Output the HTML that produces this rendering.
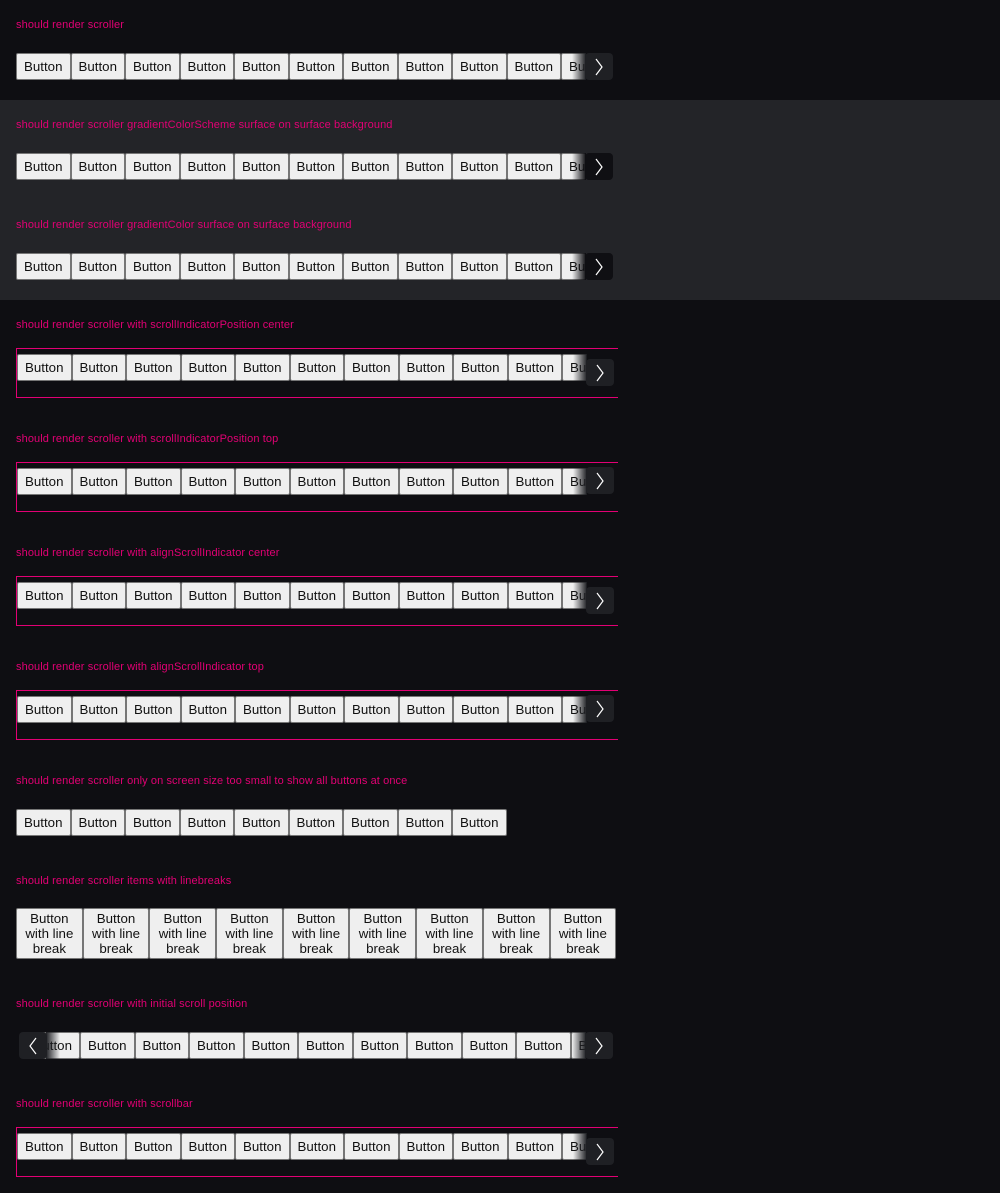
<!DOCTYPE html>
<html><head><meta charset="utf-8"><style>
*{box-sizing:border-box;margin:0;padding:0}
body{width:1000px;height:1193px;background:#0e0e12;position:relative;overflow:hidden;font-family:"Liberation Sans",sans-serif}
.lbl{position:absolute;left:16px;font-size:11px;color:#e20074;line-height:14px;white-space:nowrap;letter-spacing:0.1px;margin-top:2px}
.surf{position:absolute;left:0;top:100px;width:1000px;height:200px;background:#232428}
.row{position:absolute;left:16px;width:569px;height:28px;overflow:hidden;white-space:nowrap;display:flex;margin-top:1px}
.b{flex:0 0 54.5px;width:54.5px;height:27px;background:#efefef;border:1px solid #767676;border-radius:2px;font-size:13.3px;color:#111;display:flex;align-items:center;justify-content:center}
.lb{flex:0 0 66.7px;width:66.7px;height:51px;line-height:15px;text-align:center;flex-direction:column}
.arr{position:absolute;width:28px;height:27px;background:#1f2024;border-radius:4px;display:flex;align-items:center;justify-content:center;margin-top:1px}
.arr.d{background:#0f0f13}
.fade{position:absolute;width:14px;height:27px;margin-top:1px}
.box{position:absolute;left:16px;width:602px;height:50px;border-top:1px solid #e20074;border-left:1px solid #e20074;border-bottom:1px solid #e20074}
.box .row{margin-top:0}
</style></head><body>
<div class="surf"></div>

<div class="lbl" style="top:16px">should render scroller</div>
<div class="row" style="top:52px"><div class="b">Button</div><div class="b">Button</div><div class="b">Button</div><div class="b">Button</div><div class="b">Button</div><div class="b">Button</div><div class="b">Button</div><div class="b">Button</div><div class="b">Button</div><div class="b">Button</div><div class="b">Button</div><div class="b">Button</div></div>
<div class="fade" style="left:572px;top:52px;background:linear-gradient(90deg,rgba(31,32,36,0),#1f2024)"></div>
<div class="arr" style="left:585px;top:52px"><svg width="10" height="18" viewBox="0 0 10 18"><path d="M2 1 L8 9 L2 17" fill="none" stroke="#fff" stroke-width="1.2"/></svg></div>

<div class="lbl" style="top:116px">should render scroller gradientColorScheme surface on surface background</div>
<div class="row" style="top:152px"><div class="b">Button</div><div class="b">Button</div><div class="b">Button</div><div class="b">Button</div><div class="b">Button</div><div class="b">Button</div><div class="b">Button</div><div class="b">Button</div><div class="b">Button</div><div class="b">Button</div><div class="b">Button</div><div class="b">Button</div></div>
<div class="fade" style="left:572px;top:152px;background:linear-gradient(90deg,rgba(15,15,19,0),#0f0f13)"></div>
<div class="arr d" style="left:585px;top:152px"><svg width="10" height="18" viewBox="0 0 10 18"><path d="M2 1 L8 9 L2 17" fill="none" stroke="#fff" stroke-width="1.2"/></svg></div>

<div class="lbl" style="top:216px">should render scroller gradientColor surface on surface background</div>
<div class="row" style="top:252px"><div class="b">Button</div><div class="b">Button</div><div class="b">Button</div><div class="b">Button</div><div class="b">Button</div><div class="b">Button</div><div class="b">Button</div><div class="b">Button</div><div class="b">Button</div><div class="b">Button</div><div class="b">Button</div><div class="b">Button</div></div>
<div class="fade" style="left:572px;top:252px;background:linear-gradient(90deg,rgba(15,15,19,0),#0f0f13)"></div>
<div class="arr d" style="left:585px;top:252px"><svg width="10" height="18" viewBox="0 0 10 18"><path d="M2 1 L8 9 L2 17" fill="none" stroke="#fff" stroke-width="1.2"/></svg></div>

<div class="lbl" style="top:316px">should render scroller with scrollIndicatorPosition center</div>
<div class="box" style="top:348px"></div>
<div class="row" style="top:353px;left:17px"><div class="b">Button</div><div class="b">Button</div><div class="b">Button</div><div class="b">Button</div><div class="b">Button</div><div class="b">Button</div><div class="b">Button</div><div class="b">Button</div><div class="b">Button</div><div class="b">Button</div><div class="b">Button</div><div class="b">Button</div></div>
<div class="fade" style="left:573px;top:353px;background:linear-gradient(90deg,rgba(31,32,36,0),#1f2024)"></div>
<div class="arr" style="left:586px;top:358px"><svg width="10" height="18" viewBox="0 0 10 18"><path d="M2 1 L8 9 L2 17" fill="none" stroke="#fff" stroke-width="1.2"/></svg></div>

<div class="lbl" style="top:430px">should render scroller with scrollIndicatorPosition top</div>
<div class="box" style="top:462px"></div>
<div class="row" style="top:467px;left:17px"><div class="b">Button</div><div class="b">Button</div><div class="b">Button</div><div class="b">Button</div><div class="b">Button</div><div class="b">Button</div><div class="b">Button</div><div class="b">Button</div><div class="b">Button</div><div class="b">Button</div><div class="b">Button</div><div class="b">Button</div></div>
<div class="fade" style="left:573px;top:467px;background:linear-gradient(90deg,rgba(31,32,36,0),#1f2024)"></div>
<div class="arr" style="left:586px;top:466px"><svg width="10" height="18" viewBox="0 0 10 18"><path d="M2 1 L8 9 L2 17" fill="none" stroke="#fff" stroke-width="1.2"/></svg></div>

<div class="lbl" style="top:544px">should render scroller with alignScrollIndicator center</div>
<div class="box" style="top:576px"></div>
<div class="row" style="top:581px;left:17px"><div class="b">Button</div><div class="b">Button</div><div class="b">Button</div><div class="b">Button</div><div class="b">Button</div><div class="b">Button</div><div class="b">Button</div><div class="b">Button</div><div class="b">Button</div><div class="b">Button</div><div class="b">Button</div><div class="b">Button</div></div>
<div class="fade" style="left:573px;top:581px;background:linear-gradient(90deg,rgba(31,32,36,0),#1f2024)"></div>
<div class="arr" style="left:586px;top:586px"><svg width="10" height="18" viewBox="0 0 10 18"><path d="M2 1 L8 9 L2 17" fill="none" stroke="#fff" stroke-width="1.2"/></svg></div>

<div class="lbl" style="top:658px">should render scroller with alignScrollIndicator top</div>
<div class="box" style="top:690px"></div>
<div class="row" style="top:695px;left:17px"><div class="b">Button</div><div class="b">Button</div><div class="b">Button</div><div class="b">Button</div><div class="b">Button</div><div class="b">Button</div><div class="b">Button</div><div class="b">Button</div><div class="b">Button</div><div class="b">Button</div><div class="b">Button</div><div class="b">Button</div></div>
<div class="fade" style="left:573px;top:695px;background:linear-gradient(90deg,rgba(31,32,36,0),#1f2024)"></div>
<div class="arr" style="left:586px;top:694px"><svg width="10" height="18" viewBox="0 0 10 18"><path d="M2 1 L8 9 L2 17" fill="none" stroke="#fff" stroke-width="1.2"/></svg></div>

<div class="lbl" style="top:772px">should render scroller only on screen size too small to show all buttons at once</div>
<div class="row" style="top:808px;width:600px"><div class="b">Button</div><div class="b">Button</div><div class="b">Button</div><div class="b">Button</div><div class="b">Button</div><div class="b">Button</div><div class="b">Button</div><div class="b">Button</div><div class="b">Button</div></div>

<div class="lbl" style="top:872px">should render scroller items with linebreaks</div>
<div class="row" style="top:907px;height:52px;width:610px"><div class="b lb">Button<br>with line<br>break</div><div class="b lb">Button<br>with line<br>break</div><div class="b lb">Button<br>with line<br>break</div><div class="b lb">Button<br>with line<br>break</div><div class="b lb">Button<br>with line<br>break</div><div class="b lb">Button<br>with line<br>break</div><div class="b lb">Button<br>with line<br>break</div><div class="b lb">Button<br>with line<br>break</div><div class="b lb">Button<br>with line<br>break</div></div>

<div class="lbl" style="top:995px">should render scroller with initial scroll position</div>
<div class="row" style="top:1031px"><div class="b" style="margin-left:9.5px">Button</div><div class="b">Button</div><div class="b">Button</div><div class="b">Button</div><div class="b">Button</div><div class="b">Button</div><div class="b">Button</div><div class="b">Button</div><div class="b">Button</div><div class="b">Button</div><div class="b">Button</div></div>
<div class="fade" style="left:46px;top:1031px;background:linear-gradient(270deg,rgba(31,32,36,0),#1f2024)"></div>
<div class="arr" style="left:19px;top:1031px"><svg width="10" height="18" viewBox="0 0 10 18"><path d="M8 1 L2 9 L8 17" fill="none" stroke="#fff" stroke-width="1.2"/></svg></div>
<div class="fade" style="left:572px;top:1031px;background:linear-gradient(90deg,rgba(31,32,36,0),#1f2024)"></div>
<div class="arr" style="left:585px;top:1031px"><svg width="10" height="18" viewBox="0 0 10 18"><path d="M2 1 L8 9 L2 17" fill="none" stroke="#fff" stroke-width="1.2"/></svg></div>

<div class="lbl" style="top:1095px">should render scroller with scrollbar</div>
<div class="box" style="top:1127px"></div>
<div class="row" style="top:1132px;left:17px"><div class="b">Button</div><div class="b">Button</div><div class="b">Button</div><div class="b">Button</div><div class="b">Button</div><div class="b">Button</div><div class="b">Button</div><div class="b">Button</div><div class="b">Button</div><div class="b">Button</div><div class="b">Button</div><div class="b">Button</div></div>
<div class="fade" style="left:573px;top:1132px;background:linear-gradient(90deg,rgba(31,32,36,0),#1f2024)"></div>
<div class="arr" style="left:586px;top:1137px"><svg width="10" height="18" viewBox="0 0 10 18"><path d="M2 1 L8 9 L2 17" fill="none" stroke="#fff" stroke-width="1.2"/></svg></div>
</body></html>
